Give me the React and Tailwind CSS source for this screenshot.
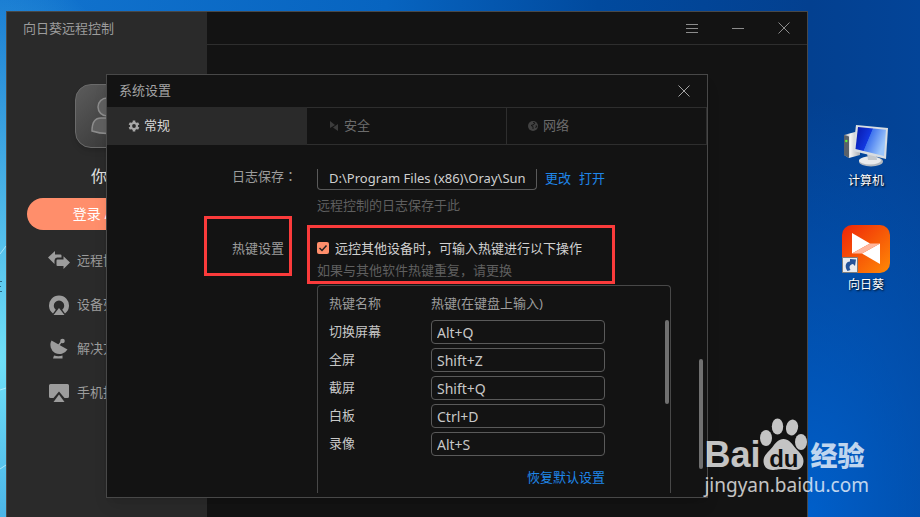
import React from 'react';

const NAV = [
  { label: '远程协助', icon: 'assist' },
  { label: '设备列表', icon: 'device' },
  { label: '解决方案', icon: 'dish' },
  { label: '手机投屏', icon: 'cast' },
];

const HOTKEYS = [
  { id: 'switch', name: '切换屏幕', keys: 'Alt+Q' },
  { id: 'full', name: '全屏', keys: 'Shift+Z' },
  { id: 'shot', name: '截屏', keys: 'Shift+Q' },
  { id: 'board', name: '白板', keys: 'Ctrl+D' },
  { id: 'record', name: '录像', keys: 'Alt+S' },
];

function NavIcon({ name }) {
  return (
    <svg width="22" height="22" viewBox="0 0 22 22" fill="currentColor" aria-hidden="true">
      {name === 'assist' && (
        <>
          <path d="M0 7.500L7 1v3.500h5.500a1 1 0 0 1 1 1v2H9a3 3 0 0 0-2.500 3V14z" />
          <path d="M22 12.500L15.500 19v-3H9.500a1 1 0 0 1-1-1v-4.500a1 1 0 0 1 1-1h6V6.200z" />
        </>
      )}
      {name === 'device' && (
        <>
          <path d="M5 19.500A10 10 0 1 1 17 19.500L14.200 15.800A5.200 5.200 0 1 0 7.800 15.800z" />
          <path d="M11 14l5.500 7h-11z" />
        </>
      )}
      {name === 'dish' && (
        <>
          <path d="M3.500 2.500L19.500 11.500A9.500 9.500 0 0 1 7 15A9.500 9.500 0 0 1 3.500 2.500z" />
          <path d="M10.500 7.500L14 3" stroke="currentColor" strokeWidth="1.500" />
          <circle cx="14.500" cy="3" r="2.300" />
          <path d="M6 17.500q4.500 1.500 8.500 0v3H5z" />
        </>
      )}
      {name === 'cast' && (
        <>
          <path d="M2.500 2h17A1.500 1.500 0 0 1 21 3.500v11a1.500 1.500 0 0 1-1.500 1.500h-3L11 9.500 5.500 16h-3A1.500 1.500 0 0 1 1 14.500v-11A1.500 1.500 0 0 1 2.500 2z" />
          <path d="M11 12.500l5.500 7.500h-11z" />
        </>
      )}
    </svg>
  );
}

function CloseIcon() {
  return (
    <svg width="12" height="12" viewBox="0 0 12 12" stroke="currentColor" aria-hidden="true">
      <path d="M.5.5l11 11M11.500.5l-11 11" />
    </svg>
  );
}

function Sidebar() {
  return (
    <aside className="w-[200px] shrink-0 bg-[#2a2a2a]">
      <h1 className="pl-4 leading-8 text-[#9c9c9c]">向日葵远程控制</h1>
      <div className="mx-auto mt-10 size-16 overflow-hidden rounded-2xl border border-[#6a6a6a] bg-linear-to-br from-[#5c5c5c] to-[#303030] shadow-md">
        <svg viewBox="0 0 62 62" aria-hidden="true">
          <g fill="#606060" stroke="#8c8c8c" strokeWidth="1.500">
            <circle cx="31" cy="22" r="9" />
            <path d="M16 46q0-13 9-13h12q9 0 9 13-15 5-30 0z" />
          </g>
        </svg>
      </div>
      <p className="mt-4 text-center text-base leading-6 text-[#e0e0e0]">你好</p>
      <button type="button" className="mx-auto mt-[10px] block h-8 w-40 rounded-full bg-[#ff8e6b] text-sm text-white">
        登录 / 注册
      </button>
      <nav className="mt-[9px]">
        {NAV.map((item) => (
          <a key={item.label} href="#" className="flex h-11 items-center gap-[7px] pl-[41px] text-[#9c9c9c]">
            <NavIcon name={item.icon} />
            {item.label}
          </a>
        ))}
      </nav>
    </aside>
  );
}

function Tabs() {
  return (
    <div role="tablist" className="grid h-[38px] grid-cols-3">
      <button type="button" role="tab" aria-selected="true" className="flex items-center gap-1 bg-[#2a2a2a] pl-[21px] text-[#d8d8d8]">
        <svg width="12" height="12" viewBox="0 0 12 12" className="text-[#a8a8a8]" aria-hidden="true">
          <g stroke="currentColor" strokeWidth="2.600">
            <path d="M6 .6v10.800M1.300 3.300l9.400 5.400M10.700 3.300L1.300 8.700" />
          </g>
          <circle cx="6" cy="6" r="4" fill="currentColor" />
          <circle cx="6" cy="6" r="1.900" fill="#2a2a2a" />
        </svg>
        常规
      </button>
      <button type="button" role="tab" aria-selected="false" className="flex items-center gap-1 border-y border-r border-[#2e2e2e] pl-[21px] text-[#6c6c6c]">
        <svg width="12" height="12" viewBox="0 0 12 12" fill="#3c3c3c" aria-hidden="true">
          <path d="M2 1l5 4-5 3z" />
          <path d="M10 4v7L5 7.500z" />
        </svg>
        安全
      </button>
      <button type="button" role="tab" aria-selected="false" className="flex items-center gap-1 border-y border-r border-[#2e2e2e] pl-[20px] text-[#6c6c6c]">
        <svg width="12" height="12" viewBox="0 0 12 12" aria-hidden="true">
          <circle cx="6" cy="6" r="5" fill="#424242" />
          <path d="M6 2.500l2 .5-1 1.500-3 1 2 1 0 2.500M8.500 6l1.500 0-1.500 2" fill="none" stroke="#141414" />
        </svg>
        网络
      </button>
    </div>
  );
}

function HotkeyPanel() {
  return (
    <div className="mt-[5px] flex h-52 w-[354px] justify-between rounded-t border border-b-0 border-[#484848] pt-1 pl-[11px]">
      <div>
        <table className="text-left">
          <thead>
            <tr className="h-7 text-[#9c9c9c]">
              <th className="w-[102px] p-0 font-normal">热键名称</th>
              <th className="w-[174px] p-0 font-normal">热键(在键盘上输入)</th>
            </tr>
          </thead>
          <tbody>
            {HOTKEYS.map((row) => (
              <tr key={row.id} className="h-7 text-[#c8c8c8]">
                <td className="p-0">
                  <label htmlFor={row.id}>{row.name}</label>
                </td>
                <td className="p-0">
                  <input
                    id={row.id}
                    defaultValue={row.keys}
                    className="block h-6 w-full rounded border border-[#5a5a5a] bg-transparent px-[5px] text-sm"
                  />
                </td>
              </tr>
            ))}
          </tbody>
        </table>
        <div className="mt-[9px] text-right leading-5">
          <a href="#" className="text-[#1f86e8]">恢复默认设置</a>
        </div>
      </div>
      <div className="mt-[30px] mr-px h-[84px] w-1 rounded-full bg-[#707070]" />
    </div>
  );
}

function SettingsDialog() {
  return (
    <section
      role="dialog"
      aria-label="系统设置"
      className="absolute top-[62px] left-[99px] w-[602px] border border-[#484848] bg-[#131313] shadow-lg"
    >
      <header className="flex h-8 items-center justify-between pr-[17px] pl-3 text-[#a4a4a4]">
        <h2>系统设置</h2>
        <button type="button" aria-label="关闭设置">
          <CloseIcon />
        </button>
      </header>
      <Tabs />
      <div className="flex justify-between pt-5 pr-1 pb-1">
        <div className="grid h-[328px] grid-cols-[85px_1fr] content-start overflow-hidden pt-1 pl-[125px]">
          <label htmlFor="log-path" className="leading-[14px] text-[#9c9c9c]">
            日志保存<span className="font-['Noto_Sans_CJK_TC',sans-serif]">：</span>
          </label>
          <div>
            <div className="flex items-start gap-2">
              <input
                id="log-path"
                defaultValue="D:\Program Files (x86)\Oray\Sun"
                className="h-[21px] w-[220px] rounded-b border border-t-0 border-[#5a5a5a] bg-transparent pr-1 pb-0.5 pl-[11px] text-[#d0d0d0]"
              />
              <a href="#" className="leading-[18px] text-[#1f86e8]">更改</a>
              <a href="#" className="leading-[18px] text-[#1f86e8]">打开</a>
            </div>
            <p className="mt-[5px] leading-5 text-[#5f5f5f]">远程控制的日志保存于此</p>
          </div>

          <h3 className="mt-[23px] leading-5 text-[#9c9c9c]">热键设置</h3>
          <div className="mt-[23px]">
            <div className="flex items-center gap-1.5 leading-5 text-[#d0d0d0]">
              <span className="grid">
                <input
                  id="enable-hotkeys"
                  type="checkbox"
                  defaultChecked
                  className="col-start-1 row-start-1 size-3 appearance-none rounded-xs bg-[#ff8e6b]"
                />
                <svg width="12" height="12" viewBox="0 0 12 12" className="pointer-events-none col-start-1 row-start-1" fill="none" stroke="#222" strokeWidth="1.500" aria-hidden="true">
                  <path d="M2.500 6l2.500 2.500L9.500 3.500" />
                </svg>
              </span>
              <label htmlFor="enable-hotkeys">远控其他设备时，可输入热键进行以下操作</label>
            </div>
            <p className="mt-0.5 leading-5 text-[#5f5f5f]">如果与其他软件热键重复，请更换</p>
            <HotkeyPanel />
          </div>
        </div>
        <div className="mt-[194px] h-[110px] w-1 rounded-full bg-[#707070]" />
      </div>

      <div className="pointer-events-none absolute top-[141px] left-[97px] h-[60px] w-[88px] border-3 border-[#fb3b3b]" />
      <div className="pointer-events-none absolute top-[150px] left-[200px] h-[59px] w-[308px] border-3 border-[#fb3b3b]" />
    </section>
  );
}

function DesktopIcons() {
  return (
    <ul className="w-28 shrink-0 pt-[111px] pl-1 text-center text-xs leading-4 text-white text-shadow-[1px_1px_2px_#000]">
      <li className="flex flex-col items-center">
        <svg width="48" height="48" viewBox="0 0 48 48" aria-hidden="true">
          <defs>
            <linearGradient id="screen" x1="0" y1="0" x2="1" y2="0.400">
              <stop offset="0" stopColor="#0716a8" />
              <stop offset="0.500" stopColor="#1238e0" />
              <stop offset="0.520" stopColor="#3f74ee" />
              <stop offset="1" stopColor="#9cc6fb" />
            </linearGradient>
            <linearGradient id="shell" x1="0" y1="0" x2="1" y2="0">
              <stop offset="0" stopColor="#8d949c" />
              <stop offset="0.400" stopColor="#f4f4f4" />
              <stop offset="1" stopColor="#a9aeb4" />
            </linearGradient>
          </defs>
          <path d="M2 13l11-3 5 2v21L7 36l-5-3z" fill="url(#shell)" />
          <path d="M2 13l5 1.500V36l-5-3z" fill="#59616a" />
          <circle cx="4.300" cy="19" r="1.200" fill="#65ef37" />
          <ellipse cx="29" cy="39.500" rx="12" ry="5" fill="#b4b9bf" />
          <ellipse cx="28" cy="38.500" rx="11" ry="4" fill="#e9ebed" />
          <path d="M25 31h9l1 7h-9z" fill="#c4c8cc" />
          <path d="M14 3l32 3-2 31-33-8z" fill="#d8dde2" />
          <path d="M16 5l28 2.700-2 26.300-28.500-7z" fill="url(#screen)" />
        </svg>
        <span className="mt-[3px]">计算机</span>
      </li>
      <li className="mt-9 flex flex-col items-center">
        <svg width="48" height="48" viewBox="0 0 48 48" aria-hidden="true">
          <defs>
            <linearGradient id="sun" x1="0" y1="0" x2="1" y2="1">
              <stop offset="0" stopColor="#ee2408" />
              <stop offset="1" stopColor="#ff8a06" />
            </linearGradient>
          </defs>
          <rect width="48" height="48" rx="10" fill="url(#sun)" />
          <path d="M10 8l18 10.500L10 28.500z" fill="#fff" />
          <path d="M38 18.500V39L20 28.500z" fill="#fff" />
          <path d="M28 18.500h10L20 28.500H10z" fill="#ffb79d" />
          <path d="M.5 32.500h15v15H.500z" fill="#e9ebef" stroke="#7d7d7d" />
          <path d="M5.500 46C2 41 4 36.500 8 36.500V34l6 .5-1 6.500-2-2c-3 .5-4.500 2.500-2.500 6z" fill="#23539a" />
        </svg>
        <span className="mt-1">向日葵</span>
      </li>
    </ul>
  );
}

function Watermark() {
  return (
    <div className="pointer-events-none absolute right-[51px] bottom-[18px] text-white opacity-75" aria-hidden="true">
      <div className="flex h-[54px] items-end">
        <span className="font-['Liberation_Sans',sans-serif] text-4xl leading-8 font-bold">Bai</span>
        <span className="grid w-[50px] place-items-end">
          <svg width="50" height="54" viewBox="0 0 50 54" fill="currentColor" className="col-start-1 row-start-1">
            <ellipse cx="6" cy="21" rx="6" ry="8" />
            <ellipse cx="17.500" cy="9.500" rx="5.700" ry="8" />
            <ellipse cx="32" cy="10.500" rx="6" ry="8" transform="rotate(12 32 10.500)" />
            <ellipse cx="41" cy="25" rx="6" ry="8" />
            <path d="M23.500 22c5 0 8 4 11 8s9 8 9 14-4 9-9 9c-4 0-6-1-11-1s-7 1-11 1c-6 0-9-4-9-9 0-6 5-9 9-14 3-4 6-8 11-8z" />
          </svg>
          <span className="col-start-1 row-start-1 pr-3 font-['Liberation_Sans',sans-serif] text-2xl leading-6 font-bold text-[#111]">du</span>
        </span>
        <span className="font-['Noto_Sans_CJK_SC',sans-serif] text-[27px] leading-8 font-black">经验</span>
      </div>
      <div className="font-['Noto_Sans',sans-serif] text-[19px] leading-7">jingyan.baidu.com</div>
    </div>
  );
}

export default function App() {
  return (
    <div className="relative flex h-screen w-full overflow-hidden bg-[radial-gradient(ellipse_180px_400px_at_0_360px,#70e0f8,transparent),radial-gradient(ellipse_220px_420px_at_88%_100%,#005fca,transparent),linear-gradient(90deg,#1274cf,#0764c0_42%,#014a9e_65%,#034090_88%,#034498)] pt-[11px] pl-[6px] font-['Noto_Sans','Noto_Sans_CJK_SC',sans-serif] text-[13px]">
      <svg width="6" height="517" viewBox="0 0 6 517" className="pointer-events-none absolute top-0 left-0" fill="none" aria-hidden="true">
        <path d="M0 254l6-8M0 390l6-2M0 469l6-4" stroke="#c8f4ff" strokeOpacity="0.700" />
        <path d="M0 281.500h2M0 286.500h1M0 291.500h2" stroke="#2c6a86" />
      </svg>
      <main className="relative flex min-w-0 flex-1 border border-b-0 border-[#484848] bg-[#131313]">
        <Sidebar />
        <header className="flex h-[33px] flex-1 items-center justify-end gap-[34px] border-b border-[#2e2e2e] pr-[17px] text-[#8c8c8c]">
          <button type="button" aria-label="菜单">
            <svg width="12" height="12" viewBox="0 0 12 12" fill="currentColor" aria-hidden="true">
              <path d="M0 2h12v1H0zM0 6h12v1H0zM0 10h12v1H0z" />
            </svg>
          </button>
          <button type="button" aria-label="最小化">
            <svg width="12" height="12" viewBox="0 0 12 12" fill="currentColor" aria-hidden="true">
              <path d="M0 6h12v1H0z" />
            </svg>
          </button>
          <button type="button" aria-label="关闭">
            <CloseIcon />
          </button>
        </header>
        <SettingsDialog />
      </main>
      <DesktopIcons />
      <Watermark />
    </div>
  );
}
